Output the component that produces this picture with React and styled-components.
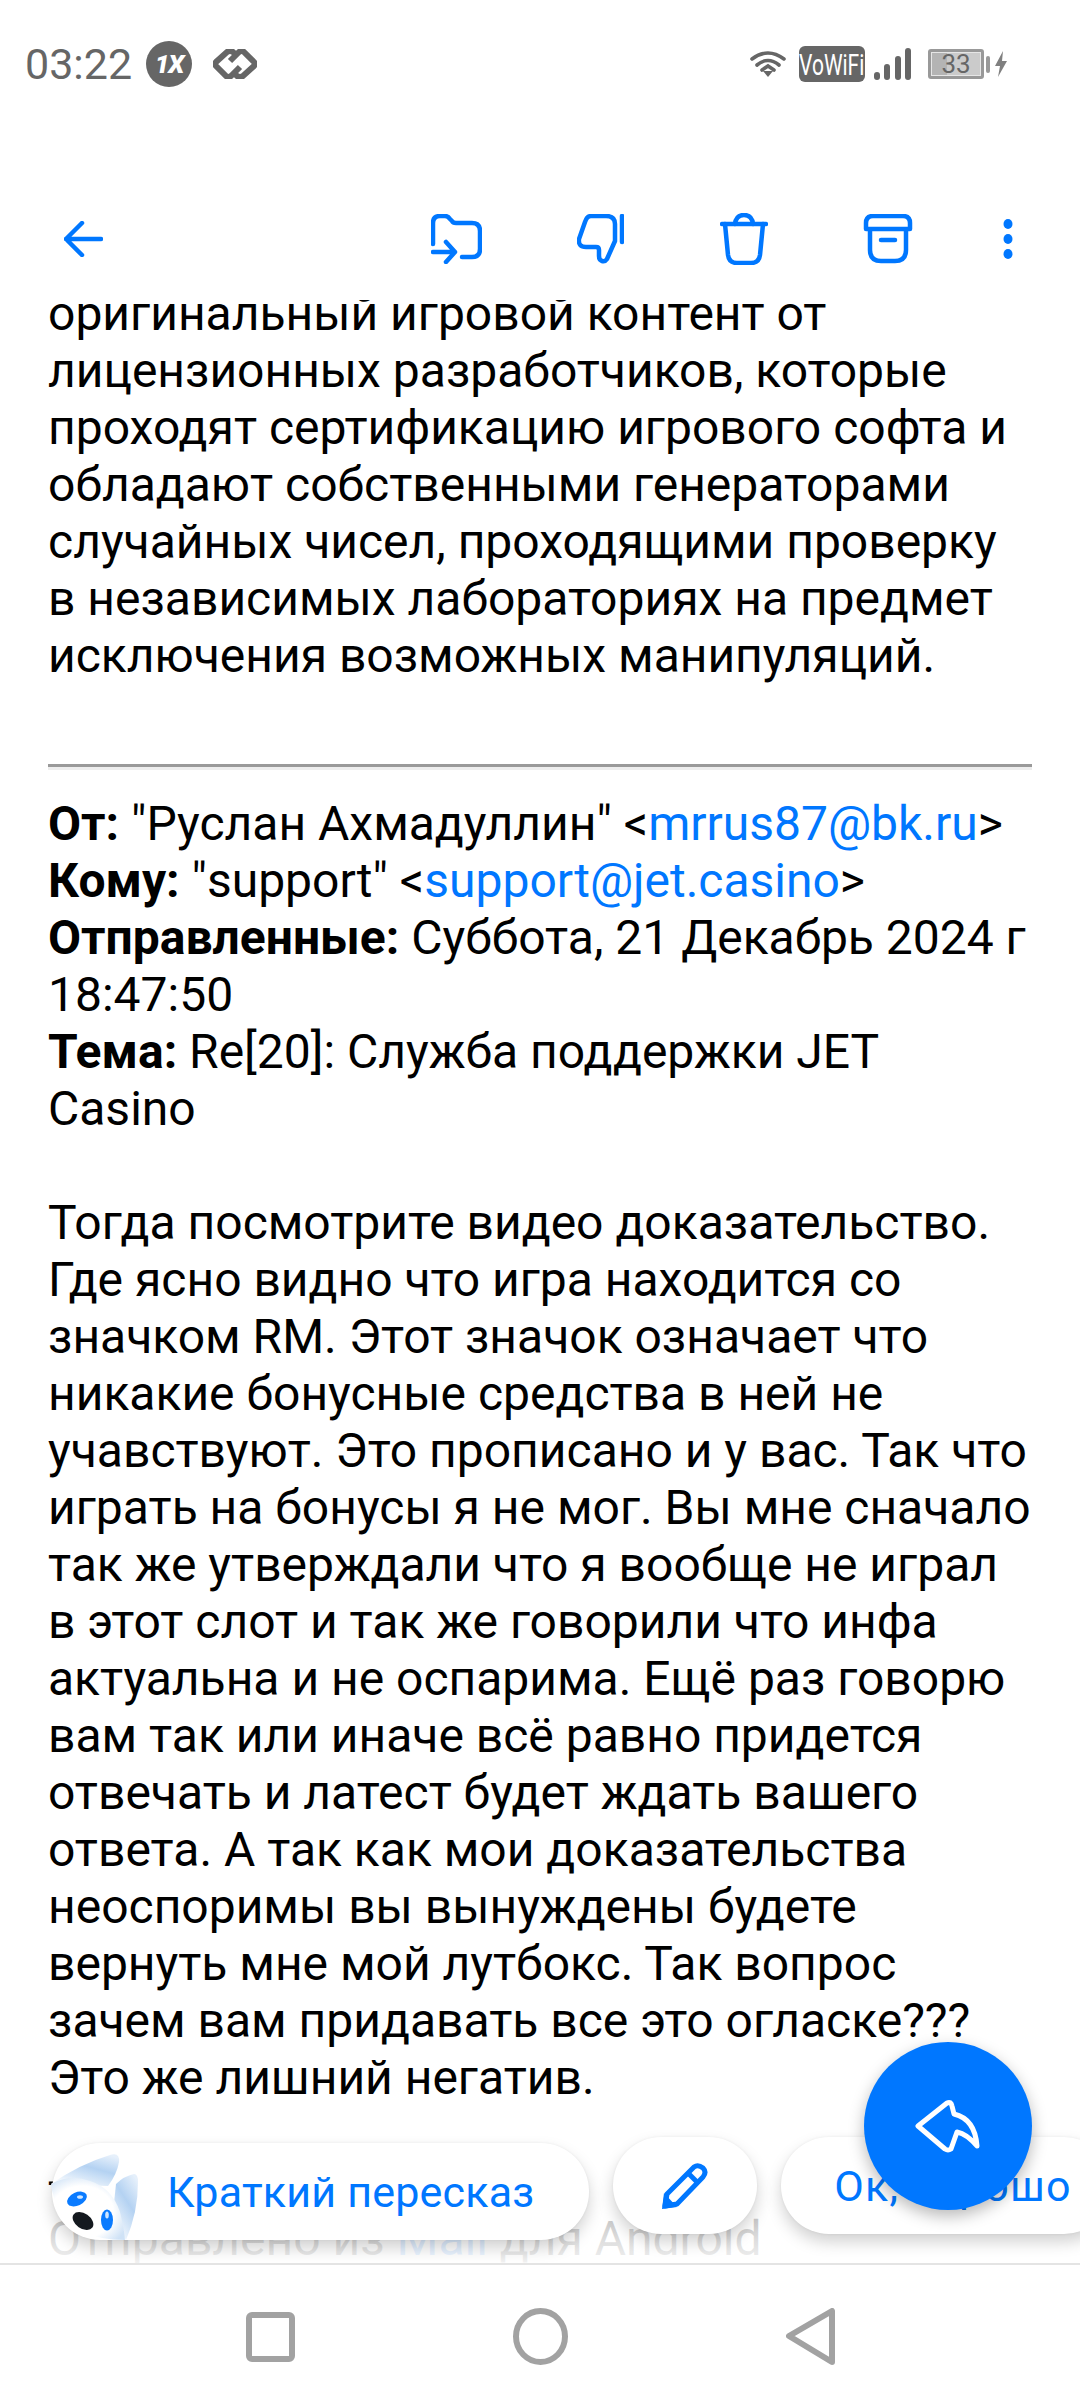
import React from "react";
import styled, { createGlobalStyle } from "styled-components";

const BLUE = "#0077ff";

const GlobalStyle = createGlobalStyle`
  html, body {
    margin: 0;
    padding: 0;
    background: #fff;
  }
  * {
    box-sizing: border-box;
  }
`;

const Page = styled.div`
  display: flex;
  flex-direction: column;
  width: 1080px;
  height: 2408px;
  overflow: hidden;
  background: #fff;
  font-family: Roboto, "Noto Sans", sans-serif;
`;

const StatusBar = styled.div`
  display: flex;
  align-items: center;
  flex: none;
  height: 128px;
  padding: 0 73px 0 25px;
  color: #666;
`;

const Time = styled.span`
  font-size: 43px;
  line-height: 1;
  margin-right: 14px;
`;

const OneXBadge = styled.span`
  display: flex;
  align-items: center;
  justify-content: center;
  width: 46px;
  height: 46px;
  margin-right: 21px;
  border-radius: 50%;
  background: #666;
  color: #fff;
  font-size: 26px;
  font-weight: 900;
  font-style: italic;
  letter-spacing: -1px;
`;

const StatusRight = styled.div`
  display: flex;
  align-items: center;
  margin-left: auto;
`;

const VoWifi = styled.span`
  display: flex;
  align-items: center;
  justify-content: center;
  width: 66px;
  height: 36px;
  margin: 0 9px 0 13px;
  border-radius: 6px;
  background: #666;
  color: #fff;
  font-size: 30px;
  overflow: hidden;
  span {
    flex: none;
    transform: scaleX(0.7);
  }
`;

const Battery = styled.span`
  position: relative;
  display: flex;
  align-items: center;
  justify-content: center;
  width: 56px;
  height: 30px;
  margin: 0 2px 0 17px;
  border: 3px solid #999;
  border-radius: 3px;
  background: linear-gradient(to right, #b4b4b4 0 33%, #cbcbcb 33% 100%);
  box-shadow: inset 0 0 0 1px #e6e6e6;
  color: #666;
  font-size: 26px;
  line-height: 1;
`;

const BatteryTip = styled.span`
  width: 4px;
  height: 17px;
  margin-right: 5px;
  border-radius: 2px;
  background: #999;
`;

const Toolbar = styled.div`
  position: relative;
  z-index: 2;
  display: flex;
  align-items: center;
  flex: none;
  height: 172px;
  padding: 50px 48px 0 64px;
  background: #fff;
`;

const ToolbarActions = styled.div`
  display: flex;
  align-items: center;
  margin-left: auto;
`;

const IconCell = styled.div`
  display: flex;
  align-items: center;
  justify-content: center;
  width: 144px;
`;

const DotsCell = styled.div`
  display: flex;
  justify-content: center;
  width: 48px;
  margin-left: 24px;
`;

const Main = styled.main`
  position: relative;
  flex: 1;
  overflow: hidden;
`;

const Body = styled.div`
  width: 984px;
  margin: -15px 0 0 48px;
  color: #000;
  font-size: 48px;
  line-height: 57px;
`;

const Lead = styled.p`
  margin: 0;
`;

const Block = styled.p`
  margin: 0 0 ${(p) => p.$after || 57}px;
`;

const Rule = styled.hr`
  height: 6px;
  margin: 80px 0 25px;
  border: 0;
  border-top: 3px solid #9a9a9a;
  border-bottom: 3px solid #eee;
`;

const MailLink = styled.span`
  color: ${BLUE};
`;

const Label = styled.b`
  font-weight: 700;
`;

const Fade = styled.div`
  position: absolute;
  left: 0;
  right: 0;
  bottom: 0;
  height: 80px;
  background: linear-gradient(
    to bottom,
    rgba(255, 255, 255, 0) 0,
    rgba(255, 255, 255, 0.78) 40%,
    rgba(255, 255, 255, 0.95) 100%
  );
`;

const ChipRow = styled.div`
  position: absolute;
  left: 52px;
  bottom: 23px;
  display: flex;
  align-items: flex-start;
  gap: 24px;
  white-space: nowrap;
`;

const Chip = styled.button`
  position: relative;
  display: flex;
  align-items: center;
  height: 97px;
  margin-top: ${(p) => (p.$raised ? "0" : "6px")};
  padding: ${(p) => p.$padding};
  border: 0;
  border-radius: 48px;
  background: #fff;
  box-shadow: 0 8px 16px rgba(0, 0, 0, 0.18), 0 0 3px rgba(0, 0, 0, 0.06);
  color: ${BLUE};
  font-family: inherit;
  font-size: 43px;
  letter-spacing: ${(p) => p.$tracking || 0}px;
`;

const Mascot = styled.svg`
  position: absolute;
  left: -2px;
  top: 9px;
`;

const Fab = styled.button`
  position: absolute;
  right: 48px;
  bottom: 53px;
  display: flex;
  align-items: center;
  justify-content: center;
  width: 168px;
  height: 168px;
  padding: 0;
  border: 0;
  border-radius: 50%;
  background: ${BLUE};
  box-shadow: 0 6px 16px rgba(0, 0, 0, 0.28);
`;

const NavBar = styled.nav`
  display: flex;
  align-items: center;
  flex: none;
  height: 145px;
  padding: 0 0 0 246px;
  gap: 218px;
  border-top: 2px solid #e4e4e4;
  background: #fff;
`;

const stroke = {
  fill: "none",
  stroke: BLUE,
  strokeWidth: 4.5,
  strokeLinecap: "round",
  strokeLinejoin: "round",
};

const Back = () => (
  <svg width="39" height="36" viewBox="0 0 39 36" {...stroke}>
    <path d="M18 2 L2 18 L18 34 M2 18 H37" />
  </svg>
);

const MoveFolder = () => (
  <svg width="51" height="50" viewBox="0 0 51 50" {...stroke}>
    <path d="M2 30 V9 Q2 2 9 2 H14 Q17 2 19 5 L21 7 Q22 9 25 9 H41 Q49 9 49 17 V35 Q49 43 41 43 H31" />
    <path d="M2 38 H24 M15 28 L24 38 L15 48" />
  </svg>
);

const ThumbDown = () => (
  <svg width="47" height="50" viewBox="0 0 47 50" {...stroke}>
    <path d="M45 2 V28" />
    <path d="M14 2 H29 Q38 2 38 10 V27 L30 45 Q28 48 25 47 Q22 46 22 42 V36 Q22 33 19 33 H9 Q1 33 2 25 L8 8 Q10 2 14 2 Z" />
  </svg>
);

const Trash = () => (
  <svg width="48" height="52" viewBox="0 0 48 52" {...stroke}>
    <path d="M2 11 H46" />
    <path d="M15 11 Q16 2 24 2 Q32 2 33 11" />
    <path d="M5 11 L8 42 Q9 50 17 50 H31 Q39 50 40 42 L43 11" />
  </svg>
);

const Archive = () => (
  <svg width="50" height="50" viewBox="0 0 50 50" {...stroke}>
    <path d="M3 15 V9 Q3 2 10 2 H40 Q47 2 47 9 V15 Z" />
    <path d="M7 16 V36 Q7 47 18 47 H32 Q43 47 43 36 V16" />
    <path d="M18 26 H32" />
  </svg>
);

const Dots = () => (
  <svg width="10" height="40" viewBox="0 0 10 40" fill={BLUE}>
    <ellipse cx="5" cy="5" rx="4.5" ry="5" />
    <ellipse cx="5" cy="20" rx="4.5" ry="5" />
    <ellipse cx="5" cy="35" rx="4.5" ry="5" />
  </svg>
);

const LinkMark = () => (
  <svg width="44" height="30" viewBox="0 0 44 30" fill="none" stroke="#666" strokeWidth="6">
    <path d="M24 7 L20 3 Q17 1 14 3 L3 13 Q1 15 3 17 L13 27 Q15 29 18 27 L27 18" />
    <path d="M20 23 L24 27 Q27 29 30 27 L41 17 Q43 15 41 13 L31 3 Q29 1 26 3 L17 12" />
  </svg>
);

const Wifi = () => (
  <svg width="36" height="28" viewBox="0 0 36 28" fill="none" stroke="#666" strokeWidth="3.6" strokeLinecap="round">
    <path d="M2 9 Q18 -3 34 9" />
    <path d="M7 15 Q18 6 29 15" />
    <path d="M12 20 L18 16 L24 20" />
    <path d="M13 21 L18 27 L23 21 Z" fill="#666" stroke="none" />
  </svg>
);

const Signal = () => (
  <svg width="37" height="32" viewBox="0 0 37 32" fill="#666">
    <rect x="0" y="24" width="6" height="8" rx="3" />
    <rect x="10" y="16" width="6" height="16" rx="3" />
    <rect x="21" y="8" width="6" height="24" rx="3" />
    <rect x="31" y="0" width="6" height="32" rx="3" />
  </svg>
);

const Bolt = () => (
  <svg width="12" height="26" viewBox="0 0 12 26" fill="#808080">
    <path d="M8 0 L0 15 H5 L3 26 L12 10 H7 Z" />
  </svg>
);

const FoxMascot = () => (
  <Mascot width="90" height="90" viewBox="0 0 90 90">
    <defs>
      <linearGradient id="ear" x1="0.2" y1="1" x2="0.8" y2="0">
        <stop offset="0" stopColor="#fff" />
        <stop offset="0.6" stopColor="#b4d2f2" />
        <stop offset="1" stopColor="#e6f0fb" />
      </linearGradient>
      <radialGradient id="face" cx="0.42" cy="0.55" r="0.65">
        <stop offset="0.65" stopColor="#fff" />
        <stop offset="1" stopColor="#cfe2f6" />
      </radialGradient>
    </defs>
    <path d="M1 32 Q30 12 60 3 Q70 0 69 10 Q67 22 58 34 Z" fill="url(#ear)" />
    <path d="M66 32 Q74 24 84 22 Q88 22 88 30 Q88 60 76 88 L62 70 Z" fill="url(#ear)" />
    <path d="M1 32 Q20 22 40 29 Q62 36 70 60 Q74 76 75 88 Q50 88 34 80 Q4 62 1 32 Z" fill="url(#face)" />
    <ellipse cx="27" cy="47" rx="10.5" ry="6.5" transform="rotate(-25 27 47)" fill="#0a7bff" />
    <ellipse cx="30" cy="45" rx="3" ry="1.8" fill="#cfe6ff" />
    <ellipse cx="33" cy="69" rx="11.5" ry="7.5" transform="rotate(35 33 69)" fill="#14191f" />
    <ellipse cx="57" cy="68" rx="6" ry="10.5" fill="#0a7bff" />
    <ellipse cx="57" cy="63" rx="1.8" ry="3.5" fill="#cfe6ff" />
  </Mascot>
);

const Pencil = () => (
  <svg width="46" height="47" viewBox="0 0 46 47" fill="none" stroke={BLUE} strokeWidth="5" strokeLinejoin="round">
    <path d="M3 44 L5 32 L32 5 Q36 2 41 6 Q45 10 41 15 L15 42 Z" fill="#fff" />
    <path d="M26 11 L36 21" />
    <path d="M0 47 L2 31 L15 45 Z" fill={BLUE} stroke="none" />
  </svg>
);

const ReplyArrow = () => (
  <svg width="66" height="54" viewBox="0 0 66 54" fill="none" stroke="#fff" strokeWidth="5" strokeLinejoin="round" strokeLinecap="round">
    <path d="M3 27 L32 4 Q36 2 37 7 L39 15 Q60 20 62 47 Q52 35 42 33 L36 50 Q33 52 30 50 Z" />
  </svg>
);

const SquareKey = () => (
  <svg width="49" height="50" viewBox="0 0 49 50" fill="none" stroke="#a2a2a2" strokeWidth="6">
    <rect x="3" y="3" width="43" height="44" rx="3" />
  </svg>
);

const CircleKey = () => (
  <svg width="55" height="57" viewBox="0 0 55 57" fill="none" stroke="#a2a2a2" strokeWidth="6">
    <ellipse cx="27.5" cy="28.5" rx="24.5" ry="25.5" />
  </svg>
);

const BackKey = () => (
  <svg width="49" height="57" viewBox="0 0 49 57" fill="none" stroke="#a2a2a2" strokeWidth="6" strokeLinejoin="round">
    <path d="M46 3 V54 L3 28 Z" />
  </svg>
);

export default function App() {
  return (
    <Page>
      <GlobalStyle />
      <StatusBar>
        <Time>03:22</Time>
        <OneXBadge>1X</OneXBadge>
        <LinkMark />
        <StatusRight>
          <Wifi />
          <VoWifi>
            <span>VoWiFi</span>
          </VoWifi>
          <Signal />
          <Battery>33</Battery>
          <BatteryTip />
          <Bolt />
        </StatusRight>
      </StatusBar>
      <Toolbar>
        <Back />
        <ToolbarActions>
          <IconCell>
            <MoveFolder />
          </IconCell>
          <IconCell>
            <ThumbDown />
          </IconCell>
          <IconCell>
            <Trash />
          </IconCell>
          <IconCell>
            <Archive />
          </IconCell>
          <DotsCell>
            <Dots />
          </DotsCell>
        </ToolbarActions>
      </Toolbar>
      <Main>
        <Body>
          <Lead>
            оригинальный игровой контент от лицензионных разработчиков, которые
            проходят сертификацию игрового софта и обладают собственными
            генераторами случайных чисел, проходящими проверку в независимых
            лабораториях на предмет исключения возможных манипуляций.
          </Lead>
          <Rule />
          <Block>
            <Label>От:</Label> "Руслан Ахмадуллин" &lt;<MailLink>mrrus87@bk.ru</MailLink>&gt;
            <br />
            <Label>Кому:</Label> "support" &lt;<MailLink>support@jet.casino</MailLink>&gt;
            <br />
            <Label>Отправленные:</Label> Суббота, 21 Декабрь 2024 г 18:47:50
            <br />
            <Label>Тема:</Label> Re[20]: Служба поддержки JET Casino
          </Block>
          <Block $after={47}>
            Тогда посмотрите видео доказательство. Где ясно видно что игра
            находится со значком RM. Этот значок означает что никакие бонусные
            средства в ней не учавствуют. Это прописано и у вас. Так что играть
            на бонусы я не мог. Вы мне сначало так же утверждали что я вообще не
            играл в этот слот и так же говорили что инфа актуальна и не оспарима.
            Ещё раз говорю вам так или иначе всё равно придется отвечать и латест
            будет ждать вашего ответа. А так как мои доказательства неоспоримы вы
            вынуждены будете вернуть мне мой лутбокс. Так вопрос зачем вам
            придавать все это огласке??? Это же лишний негатив.
          </Block>
          <div>--</div>
          <div>
            Отправлено из <MailLink>Mail</MailLink> для Android
          </div>
        </Body>
        <Fade />
        <ChipRow>
          <Chip $padding="0 55px 0 115px" $tracking={0.2}>
            Краткий пересказ
            <FoxMascot />
          </Chip>
          <Chip $raised $padding="0 49px">
            <Pencil />
          </Chip>
          <Chip $raised $padding="0 40px 0 53px" $tracking={1.2}>
            Ок, хорошо
          </Chip>
        </ChipRow>
        <Fab>
          <ReplyArrow />
        </Fab>
      </Main>
      <NavBar>
        <SquareKey />
        <CircleKey />
        <BackKey />
      </NavBar>
    </Page>
  );
}
